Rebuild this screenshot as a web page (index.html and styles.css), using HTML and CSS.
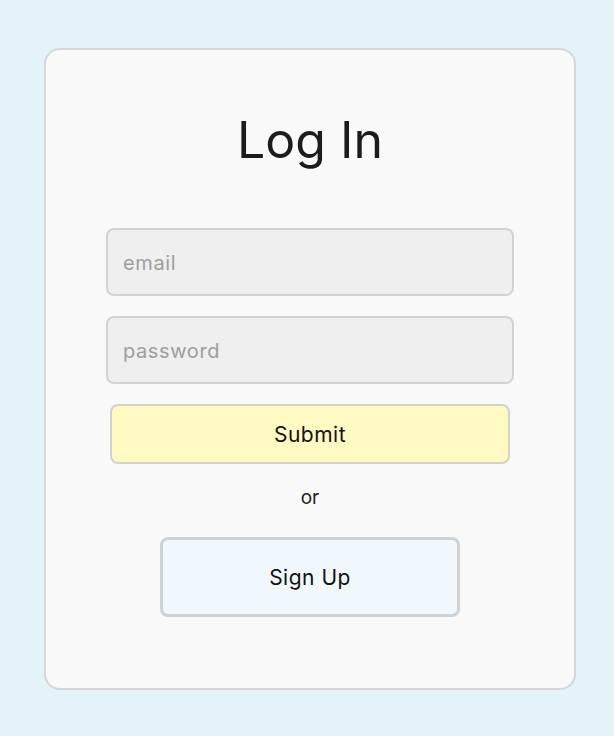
FILE: index.html
```html
<!DOCTYPE html>
<html>
<head>
<meta charset="utf-8">
<link rel="stylesheet" href="styles.css">
</head>
<body>
<div class="card">
  <h1 class="title">Log In</h1>
  <form class="form">
    <input class="field" type="text" placeholder="email">
    <input class="field" type="password" placeholder="password">
    <button class="submit" type="button">Submit</button>
  </form>
  <div class="or">or</div>
  <button class="signup" type="button">Sign Up</button>
</div>
</body>
</html>
```

FILE: styles.css
```css
* { box-sizing: border-box; }
html, body { margin: 0; padding: 0; }
body {
  background: #e3f3f8;
  font-family: Inter, "Noto Sans", sans-serif;
  width: 614px;
  height: 736px;
  padding-top: 48px;
}
.card {
  width: 532px;
  height: 642px;
  margin-left: 44px;
  background: #f9f9f9;
  border: 2px solid #d3d7d8;
  border-radius: 16px;
  display: flex;
  flex-direction: column;
  align-items: center;
}
.title {
  margin: 60px 0 0 0;
  font-size: 50px;
  font-weight: 400;
  line-height: 60px;
  color: #1c1c1c;
}
.form {
  margin-top: 58px;
  display: flex;
  flex-direction: column;
  align-items: center;
  gap: 20px;
}
.field {
  width: 408px;
  height: 68px;
  border: 2px solid #d2d2d2;
  border-radius: 8px;
  background: #efefef;
  padding: 2px 15px 0 15px;
  font-family: inherit;
  font-size: 20px;
  letter-spacing: 0.6px;
  color: #333;
  outline: none;
}
.field::placeholder { color: #9e9e9e; }
.submit {
  width: 400px;
  height: 60px;
  border: 2px solid #d2d2c8;
  border-radius: 8px;
  background: #fff9c2;
  font-family: inherit;
  font-size: 21px;
  letter-spacing: 0.5px;
  color: #111;
}
.or {
  margin-top: 20px;
  font-size: 19px;
  line-height: 28px;
  color: #222;
}
.signup {
  margin-top: 25px;
  width: 300px;
  height: 80px;
  border: 3px solid #cfd2d2;
  border-radius: 8px;
  background: #f0f8fd;
  font-family: inherit;
  font-size: 21px;
  letter-spacing: 0.5px;
  color: #111;
}
```
